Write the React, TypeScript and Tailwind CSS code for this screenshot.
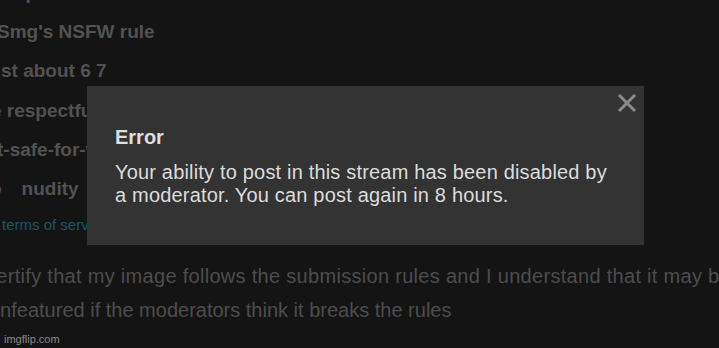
import React from "react";

export default function App() {
  const bgLine = "text-[19px] font-bold text-[#525252] whitespace-nowrap leading-[39.33px]";
  return (
    <div
      className="relative w-[719px] h-[348px] overflow-hidden bg-[#141414]"
      style={{ fontFamily: '"Liberation Sans", Arial, sans-serif' }}
    >
      <div className="flex flex-col mt-[-27.3px]">
        <div className={`${bgLine} ml-[-20px]`}>Group rules</div>
        <div className={`${bgLine} ml-[-3px]`}>Smg's NSFW rule</div>
        <div className={`${bgLine} ml-[1px]`}>st about 6 7</div>
        <div className={`${bgLine} ml-[-9px]`}>e respectful</div>
        <div className={`${bgLine} ml-[-3px]`}>t-safe-for-work</div>
        <div className={`${bgLine} ml-[-10px]`}>
          o<span className="ml-[20px]">nudity</span>
        </div>
        <div className="text-[15px] leading-[32.36px] text-[#1b5666] whitespace-nowrap ml-[2px]">terms of service</div>
        <div className="mt-[18px] text-[20px] tracking-[0.3px] leading-[34px] text-[#4d4d4d] whitespace-nowrap ml-[-14px]">
          certify that my image follows the submission rules and I understand that it may be
        </div>
        <div className="text-[20px] leading-[34px] text-[#4d4d4d] whitespace-nowrap ml-[-11px]">
          unfeatured if the moderators think it breaks the rules
        </div>
      </div>

      <div className="absolute left-[4px] top-[332.7px] text-[11px] leading-[13px] text-[#8a8a8a]">imgflip.com</div>

      <div className="absolute left-[87px] top-[86px] w-[557px] h-[159px] bg-[#333333] pl-[28px] pr-[31px] pt-[39px]">
        <div className="text-[20px] font-bold leading-[24px] text-[#dedede]">Error</div>
        <div className="mt-[11.5px] text-[20px] tracking-[0.18px] leading-[23px] text-[#dcdcdc]">
          Your ability to post in this stream has been disabled by a moderator. You can post again in 8 hours.
        </div>
        <svg
          className="absolute right-[7px] top-[8px]"
          width="20"
          height="18"
          viewBox="0 0 20 18"
        >
          <path d="M2 1 L18 17 M18 1 L2 17" stroke="#8a8a8a" strokeWidth="3" fill="none" />
        </svg>
      </div>
    </div>
  );
}
